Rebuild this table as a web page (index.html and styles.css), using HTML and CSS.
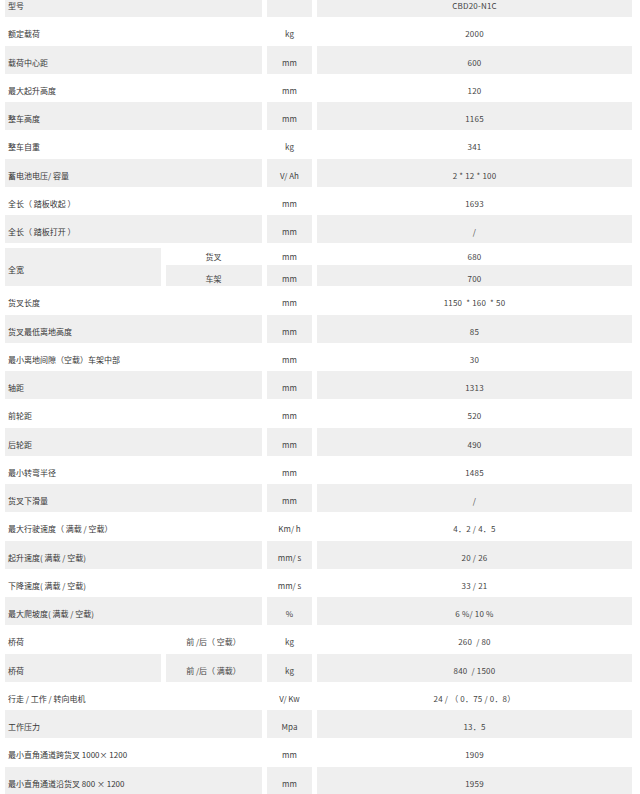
FILE: index.html
```html
<!DOCTYPE html>
<html lang="zh">
<head>
<meta charset="utf-8">
<title>CBD20-N1C 参数</title>
<link rel="stylesheet" href="styles.css">
</head>
<body>
<table class="spec">
  <colgroup>
    <col class="c-a"><col class="c-b"><col class="c-u"><col class="c-v">
  </colgroup>
  <tbody>
    <tr class="g"><td class="lbl" colspan="2">型号</td><td class="unit"></td><td class="val">CBD20-N1C</td></tr>
    <tr class="w"><td class="lbl" colspan="2">额定载荷</td><td class="unit">kg</td><td class="val">2000</td></tr>
    <tr class="g"><td class="lbl" colspan="2">载荷中心距</td><td class="unit">mm</td><td class="val">600</td></tr>
    <tr class="w"><td class="lbl" colspan="2">最大起升高度</td><td class="unit">mm</td><td class="val">120</td></tr>
    <tr class="g"><td class="lbl" colspan="2">整车高度</td><td class="unit">mm</td><td class="val">1165</td></tr>
    <tr class="w"><td class="lbl" colspan="2">整车自重</td><td class="unit">kg</td><td class="val">341</td></tr>
    <tr class="g"><td class="lbl" colspan="2">蓄电池电压/ 容量</td><td class="unit">V/ Ah</td><td class="val">2 * 12 * 100</td></tr>
    <tr class="w"><td class="lbl" colspan="2">全长（ 踏板收起 ）</td><td class="unit">mm</td><td class="val">1693</td></tr>
    <tr class="g"><td class="lbl" colspan="2">全长（ 踏板打开 ）</td><td class="unit">mm</td><td class="val">/</td></tr>
    <tr class="w s1"><td class="lbl span-g" rowspan="2">全宽</td><td class="sub">货叉</td><td class="unit">mm</td><td class="val">680</td></tr>
    <tr class="g s2"><td class="sub">车架</td><td class="unit">mm</td><td class="val">700</td></tr>
    <tr class="w"><td class="lbl" colspan="2">货叉长度</td><td class="unit">mm</td><td class="val">1150 &nbsp;* 160 &nbsp;* 50</td></tr>
    <tr class="g"><td class="lbl" colspan="2">货叉最低离地高度</td><td class="unit">mm</td><td class="val">85</td></tr>
    <tr class="w"><td class="lbl" colspan="2">最小离地间隙（空载）车架中部</td><td class="unit">mm</td><td class="val">30</td></tr>
    <tr class="g"><td class="lbl" colspan="2">轴距</td><td class="unit">mm</td><td class="val">1313</td></tr>
    <tr class="w"><td class="lbl" colspan="2">前轮距</td><td class="unit">mm</td><td class="val">520</td></tr>
    <tr class="g"><td class="lbl" colspan="2">后轮距</td><td class="unit">mm</td><td class="val">490</td></tr>
    <tr class="w"><td class="lbl" colspan="2">最小转弯半径</td><td class="unit">mm</td><td class="val">1485</td></tr>
    <tr class="g"><td class="lbl" colspan="2">货叉下滑量</td><td class="unit">mm</td><td class="val">/</td></tr>
    <tr class="w"><td class="lbl" colspan="2">最大行驶速度（ 满载 / 空载）</td><td class="unit">Km/ h</td><td class="val">4．2 / 4．5</td></tr>
    <tr class="g"><td class="lbl" colspan="2">起升速度( 满载 / 空载)</td><td class="unit">mm/ s</td><td class="val">20 / 26</td></tr>
    <tr class="w"><td class="lbl" colspan="2">下降速度( 满载 / 空载)</td><td class="unit">mm/ s</td><td class="val">33 / 21</td></tr>
    <tr class="g"><td class="lbl" colspan="2">最大爬坡度( 满载 / 空载)</td><td class="unit">%</td><td class="val">6 %/ 10 %</td></tr>
    <tr class="w"><td class="lbl">桥荷</td><td class="sub">前 /后（ 空载）</td><td class="unit">kg</td><td class="val">260 &nbsp;/ 80</td></tr>
    <tr class="g"><td class="lbl">桥荷</td><td class="sub">前 /后（ 满载）</td><td class="unit">kg</td><td class="val">840 &nbsp;/ 1500</td></tr>
    <tr class="w"><td class="lbl" colspan="2">行走 / 工作 / 转向电机</td><td class="unit">V/ Kw</td><td class="val">24 / （ 0．75 / 0．8）</td></tr>
    <tr class="g"><td class="lbl" colspan="2">工作压力</td><td class="unit">Mpa</td><td class="val">13．5</td></tr>
    <tr class="w"><td class="lbl" colspan="2">最小直角通道跨货叉 1000× 1200</td><td class="unit">mm</td><td class="val">1909</td></tr>
    <tr class="g"><td class="lbl" colspan="2">最小直角通道沿货叉 800 × 1200</td><td class="unit">mm</td><td class="val">1959</td></tr>
  </tbody>
</table>
</body>
</html>
```
FILE: styles.css
```css
html, body {
  margin: 0;
  padding: 0;
  background: #ffffff;
}
body {
  font-family: "Noto Sans CJK SC", "Noto Sans", sans-serif;
  font-size: 8px;
  color: #444444;
  overflow: hidden;
}
.spec {
  border-collapse: separate;
  border-spacing: 5px;
  table-layout: fixed;
  width: 637px;
  margin-top: -16px;
}
.c-a { width: 156px; }
.c-b { width: 96px; }
.c-u { width: 45px; }
.c-v { width: 315px; }

.spec td {
  padding: 6px 0 0 0;
  line-height: 12px;
  vertical-align: middle;
  white-space: nowrap;
}
.spec tr.g td,
.spec td.span-g {
  background: #efefef;
}
.spec tr.g { height: 28px; }
.spec tr.w { height: 18.5px; }

.spec tr.s1 { height: 12px; }
.spec tr.s1 td.sub,
.spec tr.s1 td.unit,
.spec tr.s1 td.val { line-height: 6px; }
.spec tr.s2 { height: 21px; }

.spec td.lbl {
  text-align: left;
  padding-left: 3px;
  color: #363636;
}
.sub, .unit, .val {
  text-align: center;
}
.spec td.sub { padding-right: 1px; }
.val { letter-spacing: 0.2px; }
```
